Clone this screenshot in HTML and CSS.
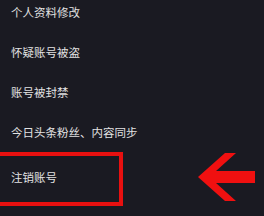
FILE: index.html
```html
<!DOCTYPE html>
<html lang="zh-CN">
<head>
  <meta charset="UTF-8" />
  <title>账号与安全</title>
  <link rel="stylesheet" href="styles.css">
</head>
<body>
  <div class="menu-list">
    <div class="menu-item">个人资料修改</div>
    <div class="menu-item">怀疑账号被盗</div>
    <div class="menu-item">账号被封禁</div>
    <div class="menu-item">今日头条粉丝、内容同步</div>
    <div class="menu-row">
      <div class="menu-item highlight">注销账号</div>
      <svg class="arrow" width="58" height="49" viewBox="0 0 58 49">
        <polygon points="0,24 27,0 38,0 18,18 57,18 57,30 18,30 38,48 27,48" fill="#f01010" />
      </svg>
    </div>
  </div>
</body>
</html>
```

FILE: styles.css
```css
body {
  margin: 0;
  background: #1a1a22;
  color: #e2e2e2;
  font-family: "Noto Sans CJK SC", "Noto Sans", sans-serif;
  font-size: 11.5px;
  overflow: hidden;
}
.menu-list {
  margin-top: -8px;
}
.menu-item {
  height: 40px;
  display: flex;
  align-items: center;
  padding-left: 11px;
}
.menu-row {
  display: flex;
  align-items: flex-start;
}
.menu-item.highlight {
  box-sizing: border-box;
  margin-left: -4px;
  width: 127px;
  height: 54px;
  border: 4px solid #e81010;
  padding-left: 11px;
  padding-bottom: 4px;
}
.arrow {
  margin-left: 75px;
  margin-top: 1px;
}
```
